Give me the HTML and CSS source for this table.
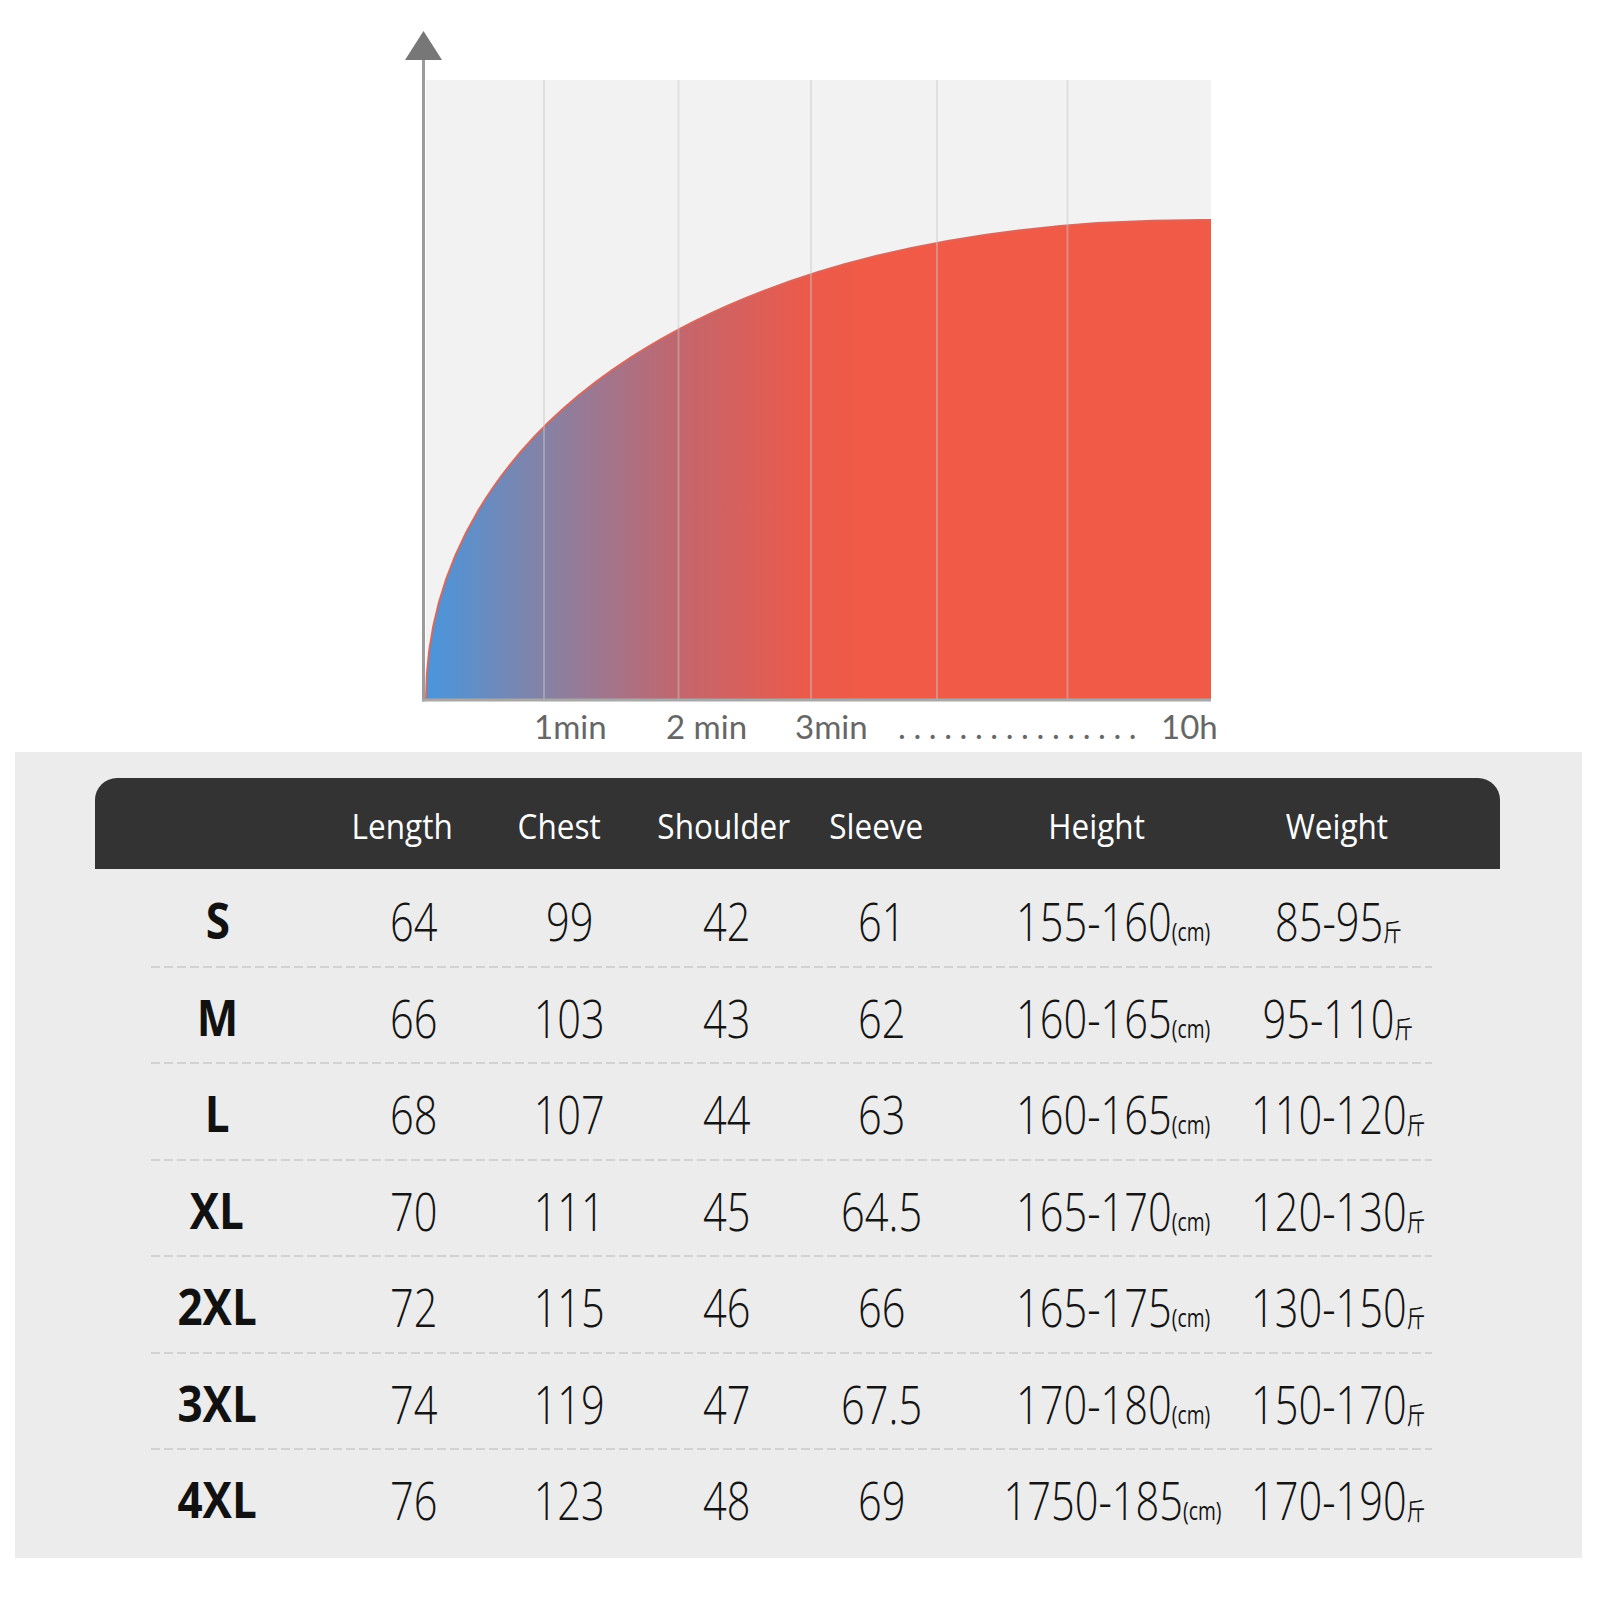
FILE: index.html
```html
<!DOCTYPE html>
<html lang="en">
<head>
<meta charset="utf-8">
<title>Size chart</title>
<link rel="stylesheet" href="styles.css">
</head>
<body>
<section class="chart">
  <svg class="chart-svg" width="1600" height="752" viewBox="0 0 1600 752" xmlns="http://www.w3.org/2000/svg">
    <defs>
      <linearGradient id="heat" gradientUnits="userSpaceOnUse" x1="426" y1="0" x2="860" y2="0">
        <stop offset="0" stop-color="#4896de"/>
        <stop offset="0.27" stop-color="#8582a6"/>
        <stop offset="0.58" stop-color="#c2666e"/>
        <stop offset="0.88" stop-color="#ec5a4a"/>
        <stop offset="1" stop-color="#f05a47"/>
      </linearGradient>
    </defs>
    <rect x="426" y="80" width="785" height="620" fill="#f2f2f2"/>
    <path d="M426,700 C426,430 710,217 1211,220 L1211,700 Z" fill="url(#heat)"/>
    <path d="M426,700 C426,430 710,217 1211,220" fill="none" stroke="#d8675c" stroke-width="2"/>
    <g stroke="rgba(200,200,200,0.45)" stroke-width="2">
      <line x1="544" y1="80" x2="544" y2="699"/>
      <line x1="678.5" y1="80" x2="678.5" y2="699"/>
      <line x1="811" y1="80" x2="811" y2="699"/>
      <line x1="937" y1="80" x2="937" y2="699"/>
      <line x1="1067.5" y1="80" x2="1067.5" y2="699"/>
    </g>
    <line x1="423.5" y1="58" x2="423.5" y2="701.5" stroke="#9b9b9b" stroke-width="3"/>
    <line x1="422" y1="700" x2="1211" y2="700" stroke="#a8a8a8" stroke-width="3"/>
    <polygon points="423.5,31 405,60 442,60" fill="#777"/>
    <text class="tick" x="534" y="739">1min</text>
    <text class="tick" x="666" y="739">2 min</text>
    <text class="tick" x="795" y="739">3min</text>
    <text class="tick dots" x="898" y="739">................</text>
    <text class="tick" x="1161" y="739">10h</text>
  </svg>
</section>

<section class="panel">
  <div class="size-table">
    <div class="head">
      <span></span>
      <span>Length</span>
      <span>Chest</span>
      <span>Shoulder</span>
      <span>Sleeve</span>
      <span>Height</span>
      <span>Weight</span>
    </div>
    <div class="rows">
      <div class="row"><span class="size">S</span><span>64</span><span>99</span><span>42</span><span>61</span><span>155-160<small class="cm">(cm)</small></span><span>85-95<small class="jin">斤</small></span></div>
      <div class="row"><span class="size">M</span><span>66</span><span>103</span><span>43</span><span>62</span><span>160-165<small class="cm">(cm)</small></span><span>95-110<small class="jin">斤</small></span></div>
      <div class="row"><span class="size">L</span><span>68</span><span>107</span><span>44</span><span>63</span><span>160-165<small class="cm">(cm)</small></span><span>110-120<small class="jin">斤</small></span></div>
      <div class="row"><span class="size">XL</span><span>70</span><span>111</span><span>45</span><span>64.5</span><span>165-170<small class="cm">(cm)</small></span><span>120-130<small class="jin">斤</small></span></div>
      <div class="row"><span class="size">2XL</span><span>72</span><span>115</span><span>46</span><span>66</span><span>165-175<small class="cm">(cm)</small></span><span>130-150<small class="jin">斤</small></span></div>
      <div class="row"><span class="size">3XL</span><span>74</span><span>119</span><span>47</span><span>67.5</span><span>170-180<small class="cm">(cm)</small></span><span>150-170<small class="jin">斤</small></span></div>
      <div class="row"><span class="size">4XL</span><span>76</span><span>123</span><span>48</span><span>69</span><span>1750-185<small class="cm">(cm)</small></span><span>170-190<small class="jin">斤</small></span></div>
    </div>
  </div>
</section>
</body>
</html>
```

FILE: styles.css
```css
body {
  margin: 0;
  background: #ffffff;
}

.chart-svg {
  display: block;
}

.tick {
  font-family: Lato, "Open Sans", sans-serif;
  font-size: 33px;
  fill: #666666;
}

.dots {
  letter-spacing: 7.6px;
}

.panel {
  margin-left: 15px;
  width: 1567px;
  height: 806px;
  box-sizing: border-box;
  padding: 26px 82px 0 80px;
  background: #ececec;
}

.head {
  height: 91px;
  box-sizing: border-box;
  padding-top: 3px;
  background: #333333;
  border-radius: 22px 22px 0 0;
  display: grid;
  grid-template-columns: 225px 164px 150px 179px 127px 314px 166px;
  align-items: center;
  color: #ffffff;
  font-family: "Open Sans", "Noto Sans", sans-serif;
  font-size: 35px;
  font-weight: 500;
  line-height: 1;
}

.head span {
  justify-self: center;
  white-space: nowrap;
  transform: scaleX(0.9);
}

.rows {
  padding-top: 2px;
}

.row {
  height: 96.5px;
  box-sizing: border-box;
  padding-top: 2px;
  display: grid;
  grid-template-columns: 244.6px 149.4px 160.8px 153.4px 156.8px 306px 144px;
  align-items: center;
  font-family: "Open Sans", "Noto Sans", sans-serif;
  font-size: 54px;
  font-weight: 350;
  line-height: 1;
  color: #141414;
  background: repeating-linear-gradient(90deg, #d2d2d2 0 9px, transparent 9px 13px) 56px 100% / 1281px 2px no-repeat;
}

.row:last-child {
  background: none;
}

.row span {
  justify-self: center;
  white-space: nowrap;
  transform: scaleX(0.77);
}

.row .size {
  font-weight: 700;
  font-size: 50px;
  color: #111111;
  transform: scaleX(0.88);
}

.cm {
  font-size: 25px;
  font-weight: 400;
}

.jin {
  font-family: "Noto Sans CJK SC", sans-serif;
  font-size: 24px;
  font-weight: 400;
}
```
